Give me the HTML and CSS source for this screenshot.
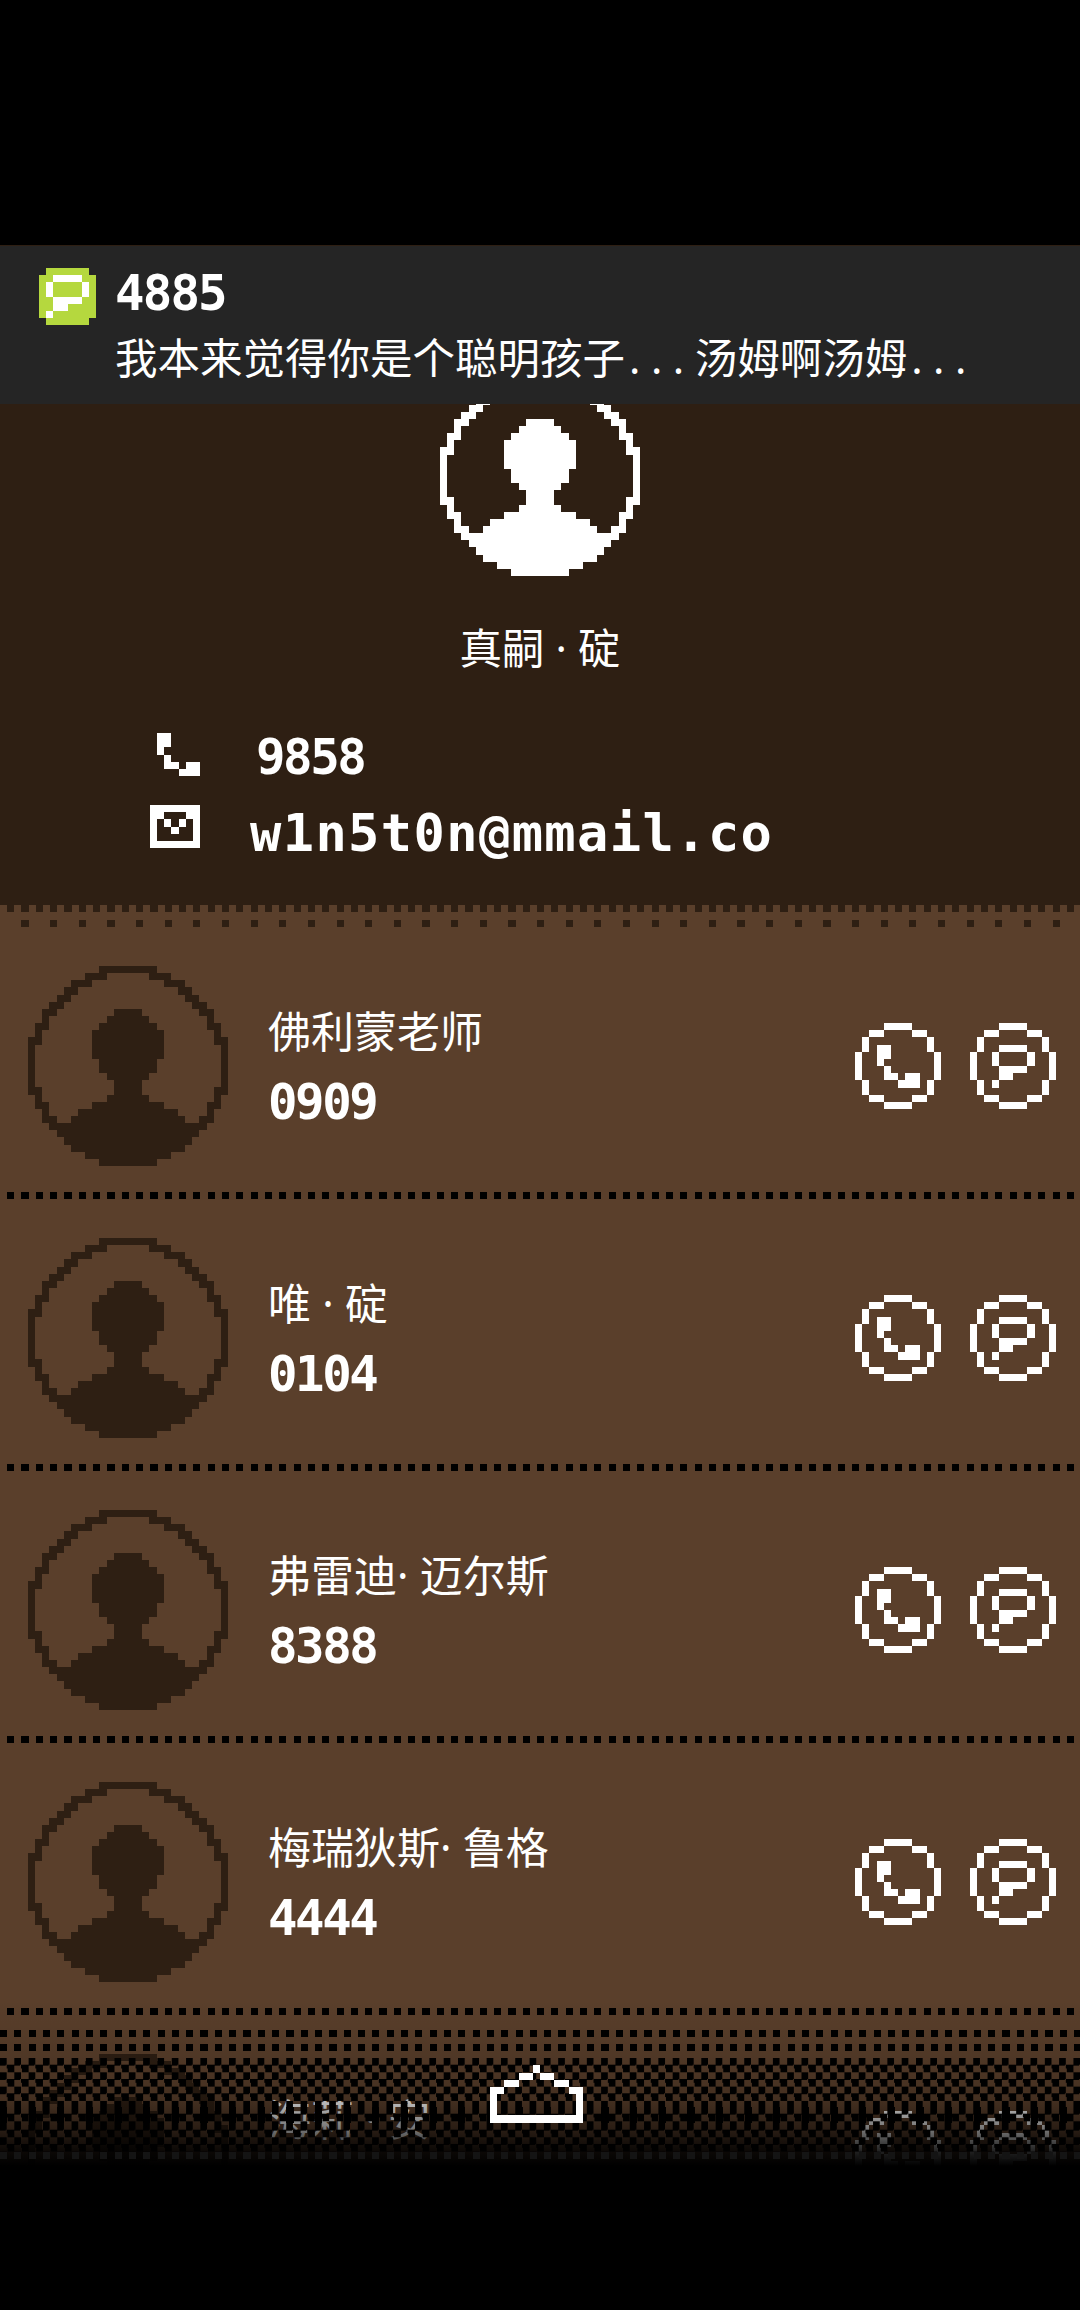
FILE: index.html
```html
<!DOCTYPE html>
<html>
  <head>
    <meta charset="UTF-8">
    <title>Contacts</title>
    <link rel="stylesheet" href="styles.css">
  </head>
  <body>
    <svg class="sprite" xmlns="http://www.w3.org/2000/svg">
      <symbol id="ic-avatar" viewBox="0 0 28 28">
        <path d="M10 0h8v1h-8zM8 1h3v1h-3zM17 1h3v1h-3zM6 2h3v1h-3zM19 2h3v1h-3zM5 3h2v1h-2zM21 3h2v1h-2zM4 4h2v1h-2zM22 4h2v1h-2zM3 5h2v1h-2zM23 5h2v1h-2zM2 6h2v1h-2zM24 6h2v1h-2zM2 7h1v1h-1zM25 7h1v1h-1zM1 8h2v1h-2zM25 8h2v1h-2zM1 9h1v1h-1zM26 9h1v1h-1zM0 10h2v1h-2zM26 10h2v1h-2zM0 11h1v6h-1zM27 11h1v6h-1zM0 17h2v1h-2zM26 17h2v1h-2zM1 18h1v1h-1zM26 18h1v1h-1zM1 19h2v1h-2zM25 19h2v1h-2zM2 20h1v1h-1zM25 20h1v1h-1zM2 21h2v1h-2zM24 21h2v1h-2zM3 22h22v1h-22zM4 23h20v1h-20zM5 24h18v1h-18zM6 25h16v1h-16zM8 26h12v1h-12zM10 27h8v1h-8z"/>
        <path d="M12 6h4v1h-4zM11 7h6v1h-6zM10 8h8v1h-8zM9 9h10v4h-10zM10 13h8v2h-8zM11 15h6v1h-6zM12 16h4v2h-4zM11 18h6v1h-6zM9 19h10v1h-10zM7 20h14v1h-14zM6 21h16v1h-16z"/>
      </symbol>
      <symbol id="ic-call" viewBox="0 0 12 12">
        <path d="M4 0h4v1h-4zM2 1h2v1h-2zM8 1h2v1h-2zM1 2h1v2h-1zM10 2h1v2h-1zM0 4h1v4h-1zM11 4h1v4h-1zM1 8h1v2h-1zM10 8h1v2h-1zM2 10h2v1h-2zM8 10h2v1h-2zM4 11h4v1h-4z"/>
        <path d="M3 3h2v2h-2zM3 5h1v1h-1zM4 6h1v1h-1zM4 7h2v1h-2zM7 7h2v1h-2zM6 8h3v1h-3z"/>
      </symbol>
      <symbol id="ic-msg" viewBox="0 0 12 12">
        <path d="M4 0h4v1h-4zM2 1h2v1h-2zM8 1h2v1h-2zM1 2h1v2h-1zM10 2h1v2h-1zM0 4h1v4h-1zM11 4h1v4h-1zM1 8h1v2h-1zM10 8h1v2h-1zM2 10h2v1h-2zM8 10h2v1h-2zM4 11h4v1h-4z"/>
        <path d="M4 3h4v1h-4zM3 4h1v2h-1zM8 4h1v2h-1zM4 6h4v1h-4zM4 7h2v1h-2zM3 8h1v1h-1z"/>
      </symbol>
      <symbol id="ic-phone" viewBox="0 0 6 6">
        <path d="M0 0h2v2h-2zM0 2h1v1h-1zM1 3h1v1h-1zM1 4h2v1h-2zM4 4h2v1h-2zM3 5h3v1h-3z"/>
      </symbol>
      <symbol id="ic-mail" viewBox="0 0 7 6">
        <path d="M0 0h7v1h-7zM0 1h2v1h-2zM5 1h2v1h-2zM0 2h1v3h-1zM6 2h1v3h-1zM2 2h1v1h-1zM4 2h1v1h-1zM3 3h1v1h-1zM0 5h7v1h-7z"/>
      </symbol>
      <symbol id="ic-home" viewBox="0 0 13 8">
        <path d="M6 0h1v1h-1zM4 1h2v1h-2zM7 1h2v1h-2zM2 2h2v1h-2zM9 2h2v1h-2zM0 3h2v1h-2zM11 3h2v1h-2zM0 4h1v3h-1zM12 4h1v3h-1zM0 7h13v1h-13z"/>
      </symbol>
    </svg>

    <div class="screen">
      <div class="notice">
        <svg class="notice-icon" viewBox="0 0 8 8">
          <path class="notice-bg" d="M1 0h6v1h-6zM0 1h8v6h-8zM1 7h6v1h-6z"/>
          <path class="notice-fg" d="M2 1h4v1h-4zM1 2h1v2h-1zM6 2h1v2h-1zM2 4h4v1h-4zM2 5h2v1h-2zM1 6h1v1h-1z"/>
        </svg>
        <div class="notice-text">
          <div class="digits">4885</div>
          <div class="notice-body">我本来觉得你是个聪明孩子<span class="dots-text">...</span>汤姆啊汤姆<span class="dots-text">...</span></div>
        </div>
      </div>

      <div class="profile">
        <svg class="avatar profile-avatar"><use href="#ic-avatar"/></svg>
        <div class="profile-name">真嗣 · 碇</div>
        <div class="contact contact-phone">
          <svg class="ic-phone"><use href="#ic-phone"/></svg>
          <span class="digits">9858</span>
        </div>
        <div class="contact contact-mail">
          <svg class="ic-mail"><use href="#ic-mail"/></svg>
          <span class="email">w1n5t0n@mmail.co</span>
        </div>
      </div>

      <div class="list-top"></div>

      <div class="row">
        <svg class="avatar"><use href="#ic-avatar"/></svg>
        <div class="info">
          <div class="name">佛利蒙老师</div>
          <div class="digits">0909</div>
        </div>
        <div class="actions">
          <svg class="round"><use href="#ic-call"/></svg>
          <svg class="round"><use href="#ic-msg"/></svg>
        </div>
      </div>
      <div class="row">
        <svg class="avatar"><use href="#ic-avatar"/></svg>
        <div class="info">
          <div class="name">唯 · 碇</div>
          <div class="digits">0104</div>
        </div>
        <div class="actions">
          <svg class="round"><use href="#ic-call"/></svg>
          <svg class="round"><use href="#ic-msg"/></svg>
        </div>
      </div>
      <div class="row">
        <svg class="avatar"><use href="#ic-avatar"/></svg>
        <div class="info">
          <div class="name">弗雷迪· 迈尔斯</div>
          <div class="digits">8388</div>
        </div>
        <div class="actions">
          <svg class="round"><use href="#ic-call"/></svg>
          <svg class="round"><use href="#ic-msg"/></svg>
        </div>
      </div>
      <div class="row">
        <svg class="avatar"><use href="#ic-avatar"/></svg>
        <div class="info">
          <div class="name">梅瑞狄斯· 鲁格</div>
          <div class="digits">4444</div>
        </div>
        <div class="actions">
          <svg class="round"><use href="#ic-call"/></svg>
          <svg class="round"><use href="#ic-msg"/></svg>
        </div>
      </div>
      <div class="row">
        <svg class="avatar"><use href="#ic-avatar"/></svg>
        <div class="info">
          <div class="name">海莉 · 安</div>
          <div class="digits"></div>
        </div>
        <div class="actions">
          <svg class="round"><use href="#ic-call"/></svg>
          <svg class="round"><use href="#ic-msg"/></svg>
        </div>
      </div>

      <!-- nav bar fade, sits on top of the list -->
      <div class="fade">
        <div class="dot-line"></div>
        <div class="dot-line"></div>
        <div class="checker check-top"></div>
        <div class="checker dense"></div>
        <div class="checker check-low"></div>
        <div class="dot-line faint"></div>
      </div>
      <svg class="home"><use href="#ic-home"/></svg>
    </div>
  </body>
</html>
```

FILE: styles.css
```css
html, body {
  margin: 0;
  background: #000;
}
svg {
  display: block;
  fill: currentColor;
  shape-rendering: crispEdges;
}
.sprite {
  display: none;
}
.screen {
  position: relative;
  width: 1080px;
  height: 2310px;
  padding-top: 245px;
  box-sizing: border-box;
  overflow: hidden;
  color: #fff;
  font-family: "Noto Sans", "Noto Sans CJK SC", sans-serif;
}
.digits {
  font-family: "DejaVu Sans Mono", monospace;
  font-weight: bold;
  font-size: 49px;
  line-height: 50px;
  height: 50px;
  letter-spacing: -2.4px;
}

/* notification */
.notice {
  position: absolute;
  top: 246px;
  left: 0;
  right: 0;
  height: 158px;
  padding: 22px 0 0 39px;
  box-sizing: border-box;
  display: flex;
  gap: 19px;
  background: #252525;
}
.notice-icon {
  width: 57px;
  height: 57px;
}
.notice-bg {
  fill: #b5d83e;
}
.notice-fg {
  fill: #fff;
}
.notice-text .digits {
  margin-top: 1px;
  margin-bottom: 14px;
  letter-spacing: -1.8px;
}
.notice-body {
  font-size: 42.5px;
  line-height: 50px;
  white-space: nowrap;
}
.dots-text {
  padding-left: 4px;
  letter-spacing: 10.5px;
}

/* own card */
.profile {
  height: 660px;
  padding-top: 131px;
  box-sizing: border-box;
  background: #2e1f13;
}
.avatar {
  width: 200px;
  height: 200px;
  flex: none;
}
.profile-avatar {
  margin: 0 auto;
}
.profile-name {
  margin-top: 42px;
  height: 60px;
  font-size: 42.5px;
  line-height: 60px;
  text-align: center;
}
.contact {
  display: flex;
  align-items: flex-start;
}
.contact-phone {
  margin-top: 55px;
  padding-left: 157px;
  gap: 56px;
}
.contact-mail {
  margin-top: 22px;
  padding-left: 150px;
  gap: 50px;
}
.ic-phone {
  width: 43px;
  height: 43px;
}
.ic-mail {
  width: 50px;
  height: 43px;
}
.email {
  margin-top: 3px;
  font-family: "DejaVu Sans Mono", monospace;
  font-weight: bold;
  font-size: 52px;
  line-height: 50px;
  letter-spacing: 1.4px;
}

/* list */
.list-top {
  height: 22px;
  background:
    repeating-linear-gradient(90deg, transparent 0 7.16px, #2e1f13 7.16px 14.32px) top / 100% 7px no-repeat,
    repeating-linear-gradient(90deg, transparent 0 21.48px, #2e1f13 21.48px 28.64px) 0 15px / 100% 7px no-repeat,
    #5a3f2b;
}
.row {
  height: 272px;
  padding: 39px 24px 33px 28px;
  box-sizing: border-box;
  display: flex;
  align-items: center;
  color: #2e1f13;
  background:
    repeating-linear-gradient(90deg, transparent 0 7.16px, #000 7.16px 14.32px) bottom / 100% 7px no-repeat,
    #5a3f2b;
}
.info {
  margin-left: 40px;
  padding-bottom: 3px;
  color: #fff;
}
.name {
  font-size: 43px;
  line-height: 60px;
  height: 60px;
  margin-bottom: 16px;
  white-space: nowrap;
}
.actions {
  margin-left: auto;
  display: flex;
  gap: 29px;
  color: #fff;
}
.round {
  width: 86px;
  height: 86px;
}

/* dither at the bottom */
.fade {
  position: absolute;
  top: 2000px;
  left: 0;
  right: 0;
  bottom: 0;
  padding-top: 30px;
  display: flex;
  flex-direction: column;
  background: linear-gradient(rgba(0,0,0,0) 0, rgba(0,0,0,.06) 30px, rgba(0,0,0,.14) 65px, rgba(0,0,0,.25) 100px, rgba(0,0,0,.55) 130px, rgba(0,0,0,.78) 145px, rgba(0,0,0,.88) 152px, #000 166px);
}
.dot-line {
  height: 7px;
  margin-bottom: 7px;
  background: repeating-linear-gradient(90deg, #000 0 7.16px, transparent 7.16px 14.32px);
}
.checker {
  background: repeating-conic-gradient(transparent 0 25%, #000 0 50%) 0 0 / 14.32px 14.32px;
}
.check-top {
  height: 49px;
}
.checker.dense {
  height: 16px;
  background:
    repeating-conic-gradient(transparent 0 25%, #000 0 50%) 0 0 / 14.32px 14.32px,
    repeating-linear-gradient(90deg, #000 0 7.16px, transparent 7.16px 28.64px);
}
.check-low {
  height: 29px;
}
.dot-line.faint {
  background: repeating-linear-gradient(90deg, #141414 0 7.16px, transparent 7.16px 14.32px);
}
.home {
  position: absolute;
  left: 490px;
  top: 2065px;
  width: 93px;
  height: 58px;
}
```
